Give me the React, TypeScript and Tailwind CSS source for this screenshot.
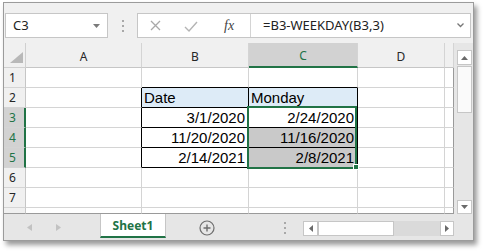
import React from "react";

const UI = "font-['Noto_Sans',Arial,sans-serif]";
const CELL = "font-['Liberation_Sans',Arial,sans-serif]";

const cols = [
  { name: "A", w: "w-[116px]" },
  { name: "B", w: "w-[107px]" },
  { name: "C", w: "w-[109px]" },
  { name: "D", w: "w-[87px]" },
  { name: "", w: "w-[9px]" },
];

type CellData = { text: string; left?: boolean; fill?: "blue" | "sel" };

const data: Record<number, Record<string, CellData>> = {
  2: { B: { text: "Date", left: true, fill: "blue" }, C: { text: "Monday", left: true, fill: "blue" } },
  3: { B: { text: "3/1/2020" }, C: { text: "2/24/2020" } },
  4: { B: { text: "11/20/2020" }, C: { text: "11/16/2020", fill: "sel" } },
  5: { B: { text: "2/14/2021" }, C: { text: "2/8/2021", fill: "sel" } },
};

const rows = [1, 2, 3, 4, 5, 6, 7, 8];

function Dots() {
  return (
    <div className="flex flex-col gap-[3px]">
      <span className="block h-[2px] w-[2px] bg-[#a8a8a8]" />
      <span className="block h-[2px] w-[2px] bg-[#a8a8a8]" />
      <span className="block h-[2px] w-[2px] bg-[#a8a8a8]" />
    </div>
  );
}

function FormulaBar() {
  return (
    <div className="flex h-[40px] shrink-0 items-start pt-[10px]">
      {/* name box */}
      <div className="ml-[1px] flex h-[25px] w-[103px] items-center border border-[#c6c6c6] bg-white pl-[7px]">
        <span className={`${UI} text-[13px] leading-none text-[#222]`}>C3</span>
        <svg className="ml-auto mr-[7px]" width="7" height="4" viewBox="0 0 7 4">
          <polygon points="0,0 7,0 3.5,4" fill="#7a7a7a" />
        </svg>
      </div>
      <div className="flex h-[25px] w-[29px] items-center justify-center">
        <Dots />
      </div>
      {/* buttons + input */}
      <div className="flex h-[25px] w-[334px] border border-[#c6c6c6] bg-white">
        <div className="flex w-[113px] items-center border-r border-[#d4d4d4]">
          <svg className="ml-[12px]" width="11" height="11" viewBox="0 0 11 11">
            <path d="M1 1 L10 10 M10 1 L1 10" stroke="#a9a9a9" strokeWidth="1.3" />
          </svg>
          <svg className="ml-[23px] mt-[2px]" width="14" height="11" viewBox="0 0 14 11">
            <path d="M1 6 L5 10 L13 1" stroke="#b4b4b4" strokeWidth="1.4" fill="none" />
          </svg>
          <span className="ml-[26px] font-['Liberation_Serif',serif] text-[14px] italic leading-none text-[#444]">
            fx
          </span>
        </div>
        <div className="flex flex-1 items-center pl-[12px]">
          <span className={`${UI} text-[13px] leading-none text-[#222]`}>=B3-WEEKDAY(B3,3)</span>
          <svg className="ml-auto mr-[6px]" width="7" height="5" viewBox="0 0 7 5">
            <path d="M0.5 0.5 L3.5 3.5 L6.5 0.5" stroke="#777" strokeWidth="1.3" fill="none" />
          </svg>
        </div>
      </div>
    </div>
  );
}

function HeaderRow() {
  return (
    <div className="flex h-[25px]">
      <div className="h-full w-[22px] border-r border-b border-[#d0d0d0] bg-[#f0f0f0]">
        <svg width="21" height="24" viewBox="0 0 21 24">
          <polygon points="19,9 6,20 19,20" fill="#b8b8b8" />
        </svg>
      </div>
      {cols.map((c, i) => (
        <div
          key={i}
          className={`${c.w} flex h-full items-center justify-center border-r border-r-[#d4d4d4] pt-[3px] ${UI} text-[12px] ${
            c.name === "C"
              ? "border-b-2 border-b-[#217346] bg-[#d2d2d2] text-[#217346]"
              : "border-b border-b-[#c6c6c6] bg-[#f0f0f0] text-[#262626]"
          }`}
        >
          {c.name}
        </div>
      ))}
    </div>
  );
}

function BodyRow({ r }: { r: number }) {
  const selRow = r >= 3 && r <= 5;
  const last = r === 8;
  return (
    <div className={`flex ${last ? "h-[6px]" : "h-[20px]"}`}>
      <div
        className={`h-full w-[22px] pl-[5px] ${UI} overflow-hidden text-[12px] leading-[19px] ${
          selRow
            ? "border-r-2 border-r-[#217346] bg-[#d2d2d2] text-[#217346]"
            : "border-r border-r-[#c6c6c6] bg-[#f0f0f0] text-[#262626]"
        } ${last ? "border-b border-b-[#9a9a9a]" : "border-b border-b-[#d4d4d4]"}`}
      >
        {last ? null : r}
      </div>
      {cols.map((c, i) => {
        const cell = data[r]?.[c.name];
        const rightBlack = r >= 2 && r <= 5 && (c.name === "A" || c.name === "B" || c.name === "C");
        const bottomBlack = r >= 1 && r <= 5 && (c.name === "B" || c.name === "C");
        const rightCls = rightBlack
          ? "border-r-black"
          : c.name === ""
            ? "border-r-[#9a9a9a]"
            : "border-r-[#d4d4d4]";
        const bottomCls = last ? "border-b-[#9a9a9a]" : bottomBlack ? "border-b-black" : "border-b-[#d4d4d4]";
        const fill =
          cell?.fill === "blue" ? "bg-[#ddebf7]" : cell?.fill === "sel" ? "bg-[#c9c9c9]" : "bg-white";
        return (
          <div
            key={i}
            className={`${c.w} h-full overflow-hidden border-r border-b ${rightCls} ${bottomCls} ${fill} ${CELL} text-[15px] leading-[19px] text-black ${
              cell?.left ? "pl-[2px] text-left" : "pr-[3px] text-right"
            }`}
          >
            {cell?.text}
          </div>
        );
      })}
    </div>
  );
}

function VScroll() {
  return (
    <div className="flex w-[19px] flex-col bg-[#e6e6e6] pl-[3px]">
      <div className="mt-[7px] flex h-[15px] w-[15px] items-center justify-center border border-[#c6c6c6] bg-white">
        <svg width="7" height="4" viewBox="0 0 7 4">
          <polygon points="0,4 7,4 3.5,0" fill="#6a6a6a" />
        </svg>
      </div>
      <div className="mt-[1px] h-[47px] w-[15px] border border-[#c6c6c6] bg-[#fafafa]" />
      <div className="mt-auto mb-[0px] flex h-[14px] w-[15px] items-center justify-center border border-[#c6c6c6] bg-white">
        <svg width="7" height="4" viewBox="0 0 7 4">
          <polygon points="0,0 7,0 3.5,4" fill="#6a6a6a" />
        </svg>
      </div>
    </div>
  );
}

function TabBar() {
  return (
    <div className="flex h-[26px] shrink-0 items-start bg-[#e6e6e6]">
      <div className="flex h-[26px] w-[96px] items-center">
        <svg className="ml-[23px]" width="5" height="7" viewBox="0 0 5 7">
          <polygon points="5,0 5,7 0,3.5" fill="#c2c2c2" />
        </svg>
        <svg className="ml-[24px]" width="5" height="7" viewBox="0 0 5 7">
          <polygon points="0,0 0,7 5,3.5" fill="#c2c2c2" />
        </svg>
      </div>
      <div
        className={`flex h-[24px] w-[66px] items-center justify-center border-x border-x-[#c6c6c6] border-b-2 border-b-[#217346] bg-white pt-[1px] ${UI} text-[12px] font-bold text-[#217346]`}
      >
        Sheet1
      </div>
      <svg className="ml-[33px] mt-[6px]" width="16" height="16" viewBox="0 0 16 16">
        <circle cx="8" cy="8" r="7" stroke="#6e6e6e" strokeWidth="1.2" fill="none" />
        <path d="M8 4.5 V11.5 M4.5 8 H11.5" stroke="#6e6e6e" strokeWidth="1.4" />
      </svg>
      <div className="ml-[69px] mt-[8px]">
        <Dots />
      </div>
      <div className="ml-[17px] mt-[7px] flex h-[15px]">
        <div className="flex w-[15px] items-center justify-center border border-[#c6c6c6] bg-white">
          <svg width="4" height="7" viewBox="0 0 4 7">
            <polygon points="4,0 4,7 0,3.5" fill="#6a6a6a" />
          </svg>
        </div>
        <div className="w-[76px] border border-[#c6c6c6] bg-white" />
        <div className="w-[46px] bg-[#dadada]" />
        <div className="flex w-[14px] items-center justify-center border border-[#c6c6c6] bg-white">
          <svg width="4" height="7" viewBox="0 0 4 7">
            <polygon points="0,0 0,7 4,3.5" fill="#6a6a6a" />
          </svg>
        </div>
      </div>
    </div>
  );
}

export default function App() {
  return (
    <div className="h-[251px] w-[483px] overflow-hidden bg-white pl-[3px] pt-[2px]">
      <div className="flex h-[239px] w-[471px] flex-col border border-[#9b9b9b] bg-[#f0f0f0] shadow-[3px_4px_5px_rgba(0,0,0,0.4)]">
        <FormulaBar />
        <div className="flex h-[171px] shrink-0">
          <div className="relative w-[450px]">
            <HeaderRow />
            {rows.map((r) => (
              <BodyRow key={r} r={r} />
            ))}
            {/* selection C3:C5 */}
            <div className="absolute left-[243px] top-[63px] h-[63px] w-[110px] border-2 border-[#217346]" />
            <div className="absolute left-[349px] top-[121px] h-[6px] w-[6px] border border-white bg-[#217346]" />
          </div>
          <VScroll />
        </div>
        <TabBar />
      </div>
    </div>
  );
}
